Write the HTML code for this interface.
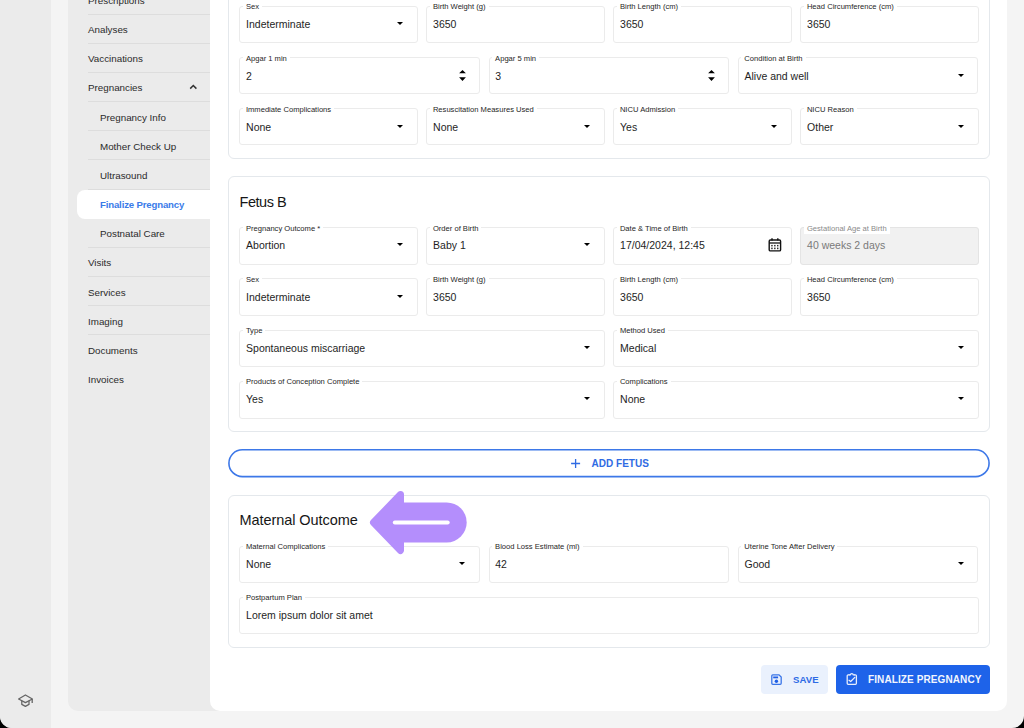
<!DOCTYPE html><html><head><meta charset="utf-8"><style>
*{margin:0;padding:0;box-sizing:border-box}
html,body{width:1024px;height:728px;overflow:hidden;background:#000;font-family:"Liberation Sans",sans-serif}
#scr{position:absolute;left:0;top:0;width:1024px;height:728px;background:#f4f4f4;border-radius:0 0 12px 12px;overflow:hidden}
#rail{position:absolute;left:0;top:0;width:51px;height:728px;background:#ebebeb}
#side{position:absolute;left:68px;top:-10px;width:160px;height:721px;background:#ebebeb;border-radius:0 0 0 10px}
#main{position:absolute;left:210px;top:-10px;width:797px;height:721px;background:#fff;border-radius:0 0 10px 10px}
.dv{position:absolute;left:88px;width:122px;height:1px;background:#dddddd}
.mt{position:absolute;font-size:9.8px;line-height:1;color:#2a2a2a;white-space:nowrap}
.card{position:absolute;left:228px;width:762px;border:1px solid #e4e8ec;border-radius:6px;background:#fff}
.f{position:absolute;height:37.5px;border:1px solid #ebebeb;border-radius:3px;background:#fff}
.f .lb{position:absolute;left:2.5px;top:-3.4px;padding:0 3px 1.5px;background:#fff;font-size:7.6px;line-height:1;color:#262626;white-space:nowrap}
.f .v{position:absolute;left:5.7px;top:12.6px;font-size:10.5px;line-height:1;color:#1e1e1e;white-space:nowrap}
.f .dd{position:absolute;right:13.5px;top:15.6px;width:0;height:0;border-left:3.3px solid transparent;border-right:3.3px solid transparent;border-top:3.3px solid #000}
.f .sp{position:absolute;right:12.85px;top:11.5px;width:7px;height:12px}
.f.dis{background:#f1f1f1;border-color:#e4e4e4}
.f.dis .lb{background:#fff;color:#8a8a8a}
.f.dis .v{color:#7a7a7a}
.title{position:absolute;left:239.5px;font-size:14.5px;line-height:1;color:#161616;white-space:nowrap}
</style></head><body><div id="scr">
<div id="rail"></div><div id="side"></div><div id="main"></div>
<div class="dv" style="top:-15.57px"></div>
<div class="dv" style="top:13.60px"></div>
<div class="dv" style="top:42.77px"></div>
<div class="dv" style="top:71.94px"></div>
<div class="dv" style="top:101.11px"></div>
<div class="dv" style="top:130.28px"></div>
<div class="dv" style="top:159.45px"></div>
<div class="dv" style="top:188.62px"></div>
<div class="dv" style="top:217.79px"></div>
<div class="dv" style="top:246.96px"></div>
<div class="dv" style="top:276.13px"></div>
<div class="dv" style="top:305.30px"></div>
<div class="dv" style="top:334.47px"></div>
<div style="position:absolute;left:77px;top:190px;width:140px;height:28.5px;background:#fff;border-radius:8px 0 0 8px"></div>
<div class="mt" style="left:88px;top:-4.17px">Prescriptions</div>
<div class="mt" style="left:88px;top:25.00px">Analyses</div>
<div class="mt" style="left:88px;top:54.17px">Vaccinations</div>
<div class="mt" style="left:88px;top:83.34px">Pregnancies</div>
<div class="mt" style="left:100px;top:112.51px">Pregnancy Info</div>
<div class="mt" style="left:100px;top:141.68px">Mother Check Up</div>
<div class="mt" style="left:100px;top:170.85px">Ultrasound</div>
<div class="mt" style="left:100px;top:200.19px;font-size:9.6px;font-weight:bold;color:#3a7be9;letter-spacing:-0.15px">Finalize Pregnancy</div>
<div class="mt" style="left:100px;top:229.19px">Postnatal Care</div>
<div class="mt" style="left:88px;top:258.36px">Visits</div>
<div class="mt" style="left:88px;top:287.53px">Services</div>
<div class="mt" style="left:88px;top:316.70px">Imaging</div>
<div class="mt" style="left:88px;top:345.87px">Documents</div>
<div class="mt" style="left:88px;top:375.04px">Invoices</div>
<svg style="position:absolute;left:188px;top:83px" width="11" height="8" viewBox="0 0 11 8"><path d="M2.2 5.6 L5.3 2.5 L8.4 5.6" fill="none" stroke="#333" stroke-width="1.5"/></svg>
<svg style="position:absolute;left:16px;top:691.6px" width="20" height="17" viewBox="0 0 20 17"><g fill="none" stroke="#666" stroke-width="1.3" stroke-linejoin="round"><path d="M2.6 7 L9.4 3 L16.4 7 L9.4 10.6 Z"/><path d="M5.8 8.8 V12.4 L9.4 14.4 L13 12.4 V8.8"/><path d="M16.2 7 V11"/></g></svg>
<div class="card" style="top:-30px;height:189px"></div>
<div class="f" style="left:239.4px;top:5.7px;width:178.2px;height:36.9px"><span class="lb">Sex</span><span class="v">Indeterminate</span><i class="dd"></i></div>
<div class="f" style="left:426.4px;top:5.7px;width:178.2px;height:36.9px"><span class="lb">Birth Weight (g)</span><span class="v">3650</span></div>
<div class="f" style="left:613.4px;top:5.7px;width:178.2px;height:36.9px"><span class="lb">Birth Length (cm)</span><span class="v">3650</span></div>
<div class="f" style="left:800.4px;top:5.7px;width:178.2px;height:36.9px"><span class="lb">Head Circumference (cm)</span><span class="v">3650</span></div>
<div class="f" style="left:239.4px;top:57.2px;width:240.6px;height:36.9px"><span class="lb">Apgar 1 min</span><span class="v">2</span><svg class="sp" viewBox="0 0 7 12"><path d="M0.1 3.2 L3.5 0 L6.9 3.2Z M0.1 7.3 L3.5 10.9 L6.9 7.3Z" fill="#000"/></svg></div>
<div class="f" style="left:488.6px;top:57.2px;width:240.6px;height:36.9px"><span class="lb">Apgar 5 min</span><span class="v">3</span><svg class="sp" viewBox="0 0 7 12"><path d="M0.1 3.2 L3.5 0 L6.9 3.2Z M0.1 7.3 L3.5 10.9 L6.9 7.3Z" fill="#000"/></svg></div>
<div class="f" style="left:737.8px;top:57.2px;width:240.6px;height:36.9px"><span class="lb">Condition at Birth</span><span class="v">Alive and well</span><i class="dd"></i></div>
<div class="f" style="left:239.4px;top:108.0px;width:178.2px;height:36.9px"><span class="lb">Immediate Complications</span><span class="v">None</span><i class="dd"></i></div>
<div class="f" style="left:426.4px;top:108.0px;width:178.2px;height:36.9px"><span class="lb">Resuscitation Measures Used</span><span class="v">None</span><i class="dd"></i></div>
<div class="f" style="left:613.4px;top:108.0px;width:178.2px;height:36.9px"><span class="lb">NICU Admission</span><span class="v">Yes</span><i class="dd"></i></div>
<div class="f" style="left:800.4px;top:108.0px;width:178.2px;height:36.9px"><span class="lb">NICU Reason</span><span class="v">Other</span><i class="dd"></i></div>
<div class="card" style="top:176.1px;height:256.1px"></div>
<div class="title" style="top:194.63px;letter-spacing:-0.45px">Fetus B</div>
<div class="f" style="left:239.4px;top:226.9px;width:178.2px;height:37.8px"><span class="lb">Pregnancy Outcome *</span><span class="v">Abortion</span><i class="dd"></i></div>
<div class="f" style="left:426.4px;top:226.9px;width:178.2px;height:37.8px"><span class="lb">Order of Birth</span><span class="v">Baby 1</span><i class="dd"></i></div>
<div class="f" style="left:613.4px;top:226.9px;width:178.2px;height:37.8px"><span class="lb">Date &amp; Time of Birth</span><span class="v">17/04/2024, 12:45</span><svg style="position:absolute;right:9px;top:9.5px" width="14" height="16" viewBox="0 0 14 16"><g fill="none" stroke="#111" stroke-width="1.4"><rect x="1.2" y="3" width="11.4" height="10.9" rx="1.2"/><path d="M1.2 6 H12.6" stroke-width="1.3"/><path d="M4 1.2 V3.6 M9.8 1.2 V3.6"/></g><g fill="#111"><rect x="3.3" y="7.9" width="1.3" height="1.5"/><rect x="6.2" y="7.9" width="1.3" height="1.5"/><rect x="9.1" y="7.9" width="1.3" height="1.5"/><rect x="3.3" y="10.6" width="1.3" height="1.6"/><rect x="6.2" y="10.6" width="1.3" height="1.6"/><rect x="9.1" y="10.6" width="1.3" height="1.6"/></g></svg></div>
<div class="f dis" style="left:800.4px;top:226.9px;width:178.2px;height:37.8px"><span class="lb">Gestational Age at Birth</span><span class="v">40 weeks 2 days</span></div>
<div class="f" style="left:239.4px;top:278.2px;width:178.2px;height:37.8px"><span class="lb">Sex</span><span class="v">Indeterminate</span><i class="dd"></i></div>
<div class="f" style="left:426.4px;top:278.2px;width:178.2px;height:37.8px"><span class="lb">Birth Weight (g)</span><span class="v">3650</span></div>
<div class="f" style="left:613.4px;top:278.2px;width:178.2px;height:37.8px"><span class="lb">Birth Length (cm)</span><span class="v">3650</span></div>
<div class="f" style="left:800.4px;top:278.2px;width:178.2px;height:37.8px"><span class="lb">Head Circumference (cm)</span><span class="v">3650</span></div>
<div class="f" style="left:239.4px;top:329.6px;width:365.2px;height:37.8px"><span class="lb">Type</span><span class="v">Spontaneous miscarriage</span><i class="dd"></i></div>
<div class="f" style="left:613.4px;top:329.6px;width:365.2px;height:37.8px"><span class="lb">Method Used</span><span class="v">Medical</span><i class="dd"></i></div>
<div class="f" style="left:239.4px;top:380.8px;width:365.2px;height:37.8px"><span class="lb">Products of Conception Complete</span><span class="v">Yes</span><i class="dd"></i></div>
<div class="f" style="left:613.4px;top:380.8px;width:365.2px;height:37.8px"><span class="lb">Complications</span><span class="v">None</span><i class="dd"></i></div>
<svg style="position:absolute;left:228px;top:449.3px" width="762" height="28.4" viewBox="0 0 762 28.4"><rect x="0.8" y="0.8" width="760.4" height="26.8" rx="13.4" fill="none" stroke="#3d78e8" stroke-width="1.6"/></svg>
<svg style="position:absolute;left:570px;top:458px" width="11" height="11" viewBox="0 0 11 11"><path d="M5.6 1 V10 M1.1 5.5 H10.1" stroke="#2f6be3" stroke-width="1.3"/></svg>
<div style="position:absolute;left:591.6px;top:458.84px;font-size:10px;line-height:1;font-weight:bold;color:#2f6be3;white-space:nowrap">ADD FETUS</div>
<div class="card" style="top:494.6px;height:153.8px"></div>
<div class="title" style="top:513.13px;letter-spacing:-0.07px">Maternal Outcome</div>
<div class="f" style="left:239.4px;top:545.7px;width:240.6px;height:37.3px"><span class="lb">Maternal Complications</span><span class="v">None</span><i class="dd"></i></div>
<div class="f" style="left:488.6px;top:545.7px;width:240.6px;height:37.3px"><span class="lb">Blood Loss Estimate (ml)</span><span class="v">42</span></div>
<div class="f" style="left:737.8px;top:545.7px;width:240.6px;height:37.3px"><span class="lb">Uterine Tone After Delivery</span><span class="v">Good</span><i class="dd"></i></div>
<div class="f" style="left:239.4px;top:596.5px;width:739.2px;height:37.3px"><span class="lb">Postpartum Plan</span><span class="v">Lorem ipsum dolor sit amet</span></div>
<svg style="position:absolute;left:360px;top:485px" width="120" height="75" viewBox="0 0 120 75"><path d="M40.5 9.5 L13.5 37.5 L40.5 65.5 Z" fill="#b48efc" stroke="#b48efc" stroke-width="7" stroke-linejoin="round"/><path d="M40 17.4 H86.7 A20 20 0 0 1 86.7 57.4 H40 Z" fill="#b48efc"/><path d="M34.8 37.5 H87.7" stroke="#fff" stroke-width="4" stroke-linecap="round"/></svg>
<div style="position:absolute;left:761px;top:665px;width:67px;height:29px;background:#eaf1fd;border-radius:4px"></div>
<svg style="position:absolute;left:769px;top:672px" width="15" height="15" viewBox="0 0 15 15"><path d="M3.8 2.8 H10 L12.2 5 V11.3 Q12.2 12.3 11.2 12.3 H3.8 Q2.8 12.3 2.8 11.3 V3.8 Q2.8 2.8 3.8 2.8 Z" fill="none" stroke="#3a75e8" stroke-width="1.3"/><rect x="4.2" y="4.5" width="4.9" height="1.8" fill="#1f5fe6"/><circle cx="7.4" cy="9.2" r="1.7" fill="#1f5fe6"/></svg>
<div style="position:absolute;left:793px;top:674.97px;font-size:9.6px;line-height:1;font-weight:bold;color:#2e6be5;white-space:nowrap;letter-spacing:0.1px">SAVE</div>
<div style="position:absolute;left:836px;top:665px;width:154px;height:29px;background:#1e63e9;border-radius:4px"></div>
<svg style="position:absolute;left:844px;top:671px" width="15" height="16" viewBox="0 0 15 16"><g fill="none" stroke="#e8eefc" stroke-width="1.3" stroke-linejoin="round" stroke-linecap="round"><path d="M5.2 3.8 H4.2 Q3.2 3.8 3.2 4.8 V12.3 Q3.2 13.3 4.2 13.3 H11.4 Q12.4 13.3 12.4 12.3 V4.8 Q12.4 3.8 11.4 3.8 H10.4"/><path d="M5.2 3.8 H6.3 Q6.5 2.7 7.8 2.7 Q9.1 2.7 9.3 3.8 H10.4"/><path d="M5 9.3 L6.7 10.5 L10.8 6.4"/></g></svg>
<div style="position:absolute;left:868px;top:674.53px;font-size:10px;line-height:1;font-weight:bold;color:#f2f6fe;white-space:nowrap;letter-spacing:0.1px">FINALIZE PREGNANCY</div>
</div></body></html>
